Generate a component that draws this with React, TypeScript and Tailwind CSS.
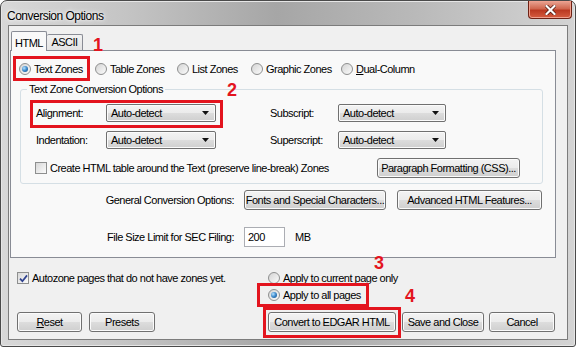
import React from 'react';

const Radio = ({ checked = false }: { checked?: boolean }) => (
  <span className="flex h-[12px] w-[12px] shrink-0 items-center justify-center rounded-full border border-[#8e8f8f] bg-[linear-gradient(135deg,#d4d4d4,#fbfbfb)]">
    {checked && (
      <span className="h-[6px] w-[6px] rounded-full bg-[radial-gradient(circle_at_35%_35%,#b5e2ff_0%,#3a86c8_50%,#164a80_100%)]" />
    )}
  </span>
);

const Check = ({ checked = false }: { checked?: boolean }) => (
  <span className="flex h-[12px] w-[12px] shrink-0 items-center justify-center border border-[#8e8f8f] bg-[linear-gradient(135deg,#d8d8d8,#fbfbfb)]">
    {checked && (
      <svg width="9" height="9" viewBox="0 0 9 9">
        <path d="M1 4.6 L3.4 7.2 L8 1.4" fill="none" stroke="#30428f" strokeWidth="1.7" />
      </svg>
    )}
  </span>
);

const Btn = ({ children, className = '' }: { children: React.ReactNode; className?: string }) => (
  <div
    className={`flex h-[20px] shrink-0 items-center justify-center rounded-[3px] border border-[#707070] bg-[linear-gradient(#f3f3f3,#ebebeb_50%,#dddddd_50%,#cfcfcf)] shadow-[inset_0_0_0_1px_#fbfbfb] ${className}`}
  >
    {children}
  </div>
);

const Select = ({ className = '' }: { className?: string }) => (
  <div
    className={`flex h-[18px] shrink-0 items-center justify-between rounded-[2px] border border-[#707070] bg-[linear-gradient(#f3f3f3,#ebebeb_50%,#dddddd_50%,#cfcfcf)] pl-[4px] pr-[6px] shadow-[inset_0_0_0_1px_#fbfbfb] ${className}`}
  >
    <span>Auto-detect</span>
    <svg width="7" height="4" viewBox="0 0 7 4">
      <path d="M0 0h7L3.5 4z" fill="#111" />
    </svg>
  </div>
);

const RadioItem = ({ label, checked = false, className = '' }: { label: React.ReactNode; checked?: boolean; className?: string }) => (
  <div className={`flex items-center gap-[3px] ${className}`}>
    <Radio checked={checked} />
    <span className="leading-[14px]">{label}</span>
  </div>
);

export default function App() {
  return (
    <div className="relative h-[349px] w-[576px] overflow-hidden bg-white font-['Liberation_Sans',Arial,sans-serif] text-[11px] tracking-[-0.5px] text-black">
      <div className="flex h-[347px] w-[576px] flex-col rounded-t-[7px] rounded-b-[3px] border border-[#4a4a4a] bg-[linear-gradient(90deg,#d8d8d8,#c4c4c4_22%,#a6a6a6_48%,#b9b9b9_72%,#d4d4d4)] shadow-[inset_0_0_0_1px_#e6e6e6]">
        {/* title bar */}
        <div className="flex h-[24px] shrink-0 items-start justify-between">
          <span className="ml-[6px] mt-[8px] text-[12px] leading-[14px] [text-shadow:0_0_6px_#ffffff,0_0_3px_#ffffff]">
            Conversion Options
          </span>
          <div className="mr-[3px] flex h-[18px] w-[44px] items-center justify-center rounded-b-[4px] border border-t-0 border-[#6e2114] bg-[linear-gradient(#eaa594,#d0674f_45%,#bb3921_55%,#d65d40)] shadow-[inset_0_0_0_1px_#f0a08e]">
            <svg width="11" height="10" viewBox="0 0 11 10">
              <path d="M1.5 1 L9.5 9 M9.5 1 L1.5 9" stroke="#4a1309" strokeWidth="3.6" strokeLinecap="square" />
              <path d="M1.5 1 L9.5 9 M9.5 1 L1.5 9" stroke="#ffffff" strokeWidth="2.2" strokeLinecap="square" />
            </svg>
          </div>
        </div>

        {/* client area */}
        <div className="mx-[7px] h-[315px] shrink-0 border border-[#7c7c7c] bg-[#f0f0f0]">
          {/* tabs */}
          <div className="flex h-[24px] items-end pl-[2px]">
            <div className="relative z-10 -mb-px flex h-[20px] w-[36px] items-start justify-center rounded-t-[2px] border border-b-0 border-[#898c95] bg-[#f9f9f9] pt-[3px]">
              HTML
            </div>
            <div className="flex h-[16px] w-[36px] items-center justify-center rounded-t-[2px] border border-b-0 border-l-0 border-[#898c95] bg-[linear-gradient(#f2f2f2,#e3e3e3)]">
              ASCII
            </div>
          </div>

          {/* tab panel */}
          <div className="ml-[1px] h-[208px] w-[546px] border border-[#898c95] bg-[#f9f9f9]">
            <div className="flex h-[14px] items-center pl-[8px] mt-[11px]">
              <RadioItem checked label="Text Zones" className="w-[76px]" />
              <RadioItem label="Table Zones" className="w-[82px]" />
              <RadioItem label="List Zones" className="w-[74px]" />
              <RadioItem label="Graphic Zones" className="w-[90px]" />
              <RadioItem
                label={
                  <>
                    <span className="underline">D</span>ual-Column
                  </>
                }
              />
            </div>

            {/* group box */}
            <div className="relative ml-[9px] mt-[13px] h-[95px] w-[523px] rounded-[3px] border border-[#d5dfe5]">
              <span className="absolute -top-[8px] left-[6px] bg-[#f9f9f9] px-[2px] leading-[14px]">
                Text Zone Conversion Options
              </span>
              <div className="flex h-[18px] items-center pl-[15px] mt-[14px]">
                <span className="w-[70px]">Alignment:</span>
                <Select className="w-[110px]" />
                <span className="ml-[54px] w-[68px]">Subscript:</span>
                <Select className="w-[108px]" />
              </div>
              <div className="mt-[9px] flex h-[18px] items-center pl-[15px]">
                <span className="w-[70px]">Indentation:</span>
                <Select className="w-[110px]" />
                <span className="ml-[54px] w-[68px]">Superscript:</span>
                <Select className="w-[108px]" />
              </div>
              <div className="mt-[9px] flex h-[20px] items-center pl-[14px]">
                <div className="flex w-[342px] items-center gap-[3px]">
                  <Check />
                  <span>Create HTML table around the Text (preserve line-break) Zones</span>
                </div>
                <Btn className="w-[143px]">Paragraph Formatting (CSS)...</Btn>
              </div>
            </div>

            <div className="mt-[6px] flex h-[20px] items-center">
              <span className="w-[223px] text-right">General Conversion Options:</span>
              <Btn className="ml-[10px] w-[142px]">Fonts and Special Characters...</Btn>
              <Btn className="ml-[11px] w-[145px]">Advanced HTML Features...</Btn>
            </div>

            <div className="mt-[17px] flex h-[20px] items-center">
              <span className="w-[223px] text-right">File Size Limit for SEC Filing:</span>
              <div className="ml-[10px] flex h-[20px] w-[41px] items-start border border-[#abadb3] bg-white pl-[3px] pt-[1px]">
                200
              </div>
              <span className="ml-[10px]">MB</span>
            </div>
          </div>

          {/* below panel */}
          <div className="flex h-[54px]">
            <div className="w-[259px] pl-[8px] pt-[13px]">
              <div className="flex h-[14px] items-center gap-[3px]">
                <Check checked />
                <span>Autozone pages that do not have zones yet.</span>
              </div>
            </div>
            <div className="pt-[13px]">
              <RadioItem label="Apply to current page only" className="h-[14px]" />
              <RadioItem checked label="Apply to all pages" className="mt-[3px] h-[14px]" />
            </div>
          </div>

          <div className="flex h-[20px] items-center pl-[8px]">
            <Btn className="w-[65px]">
              <span>
                <span className="underline">R</span>eset
              </span>
            </Btn>
            <Btn className="ml-[7px] w-[66px]">Presets</Btn>
            <Btn className="ml-[113px] w-[128px]">Convert to EDGAR HTML</Btn>
            <Btn className="ml-[6px] w-[82px] border-[#3c7fb1] shadow-[inset_0_0_0_1px_#a8dcf7]">Save and Close</Btn>
            <Btn className="ml-[5px] w-[66px]">Cancel</Btn>
          </div>
        </div>
      </div>

      {/* annotations */}
      <div className="absolute left-[13px] top-[56px] h-[25px] w-[77px] border-[3px] border-[#e3141e]" />
      <span className="absolute left-[93px] top-[38px] text-[18px] font-bold leading-[14px] tracking-normal text-[#e3141e]">1</span>
      <div className="absolute left-[30px] top-[100px] h-[28px] w-[193px] border-[3px] border-[#e3141e]" />
      <span className="absolute left-[227px] top-[83px] text-[18px] font-bold leading-[14px] tracking-normal text-[#e3141e]">2</span>
      <div className="absolute left-[257px] top-[283px] h-[24px] w-[112px] border-[3px] border-[#e3141e]" />
      <span className="absolute left-[374px] top-[256px] text-[18px] font-bold leading-[14px] tracking-normal text-[#e3141e]">3</span>
      <div className="absolute left-[263px] top-[307px] h-[31px] w-[138px] border-[3px] border-[#e3141e]" />
      <span className="absolute left-[405px] top-[289px] text-[18px] font-bold leading-[14px] tracking-normal text-[#e3141e]">4</span>
    </div>
  );
}
